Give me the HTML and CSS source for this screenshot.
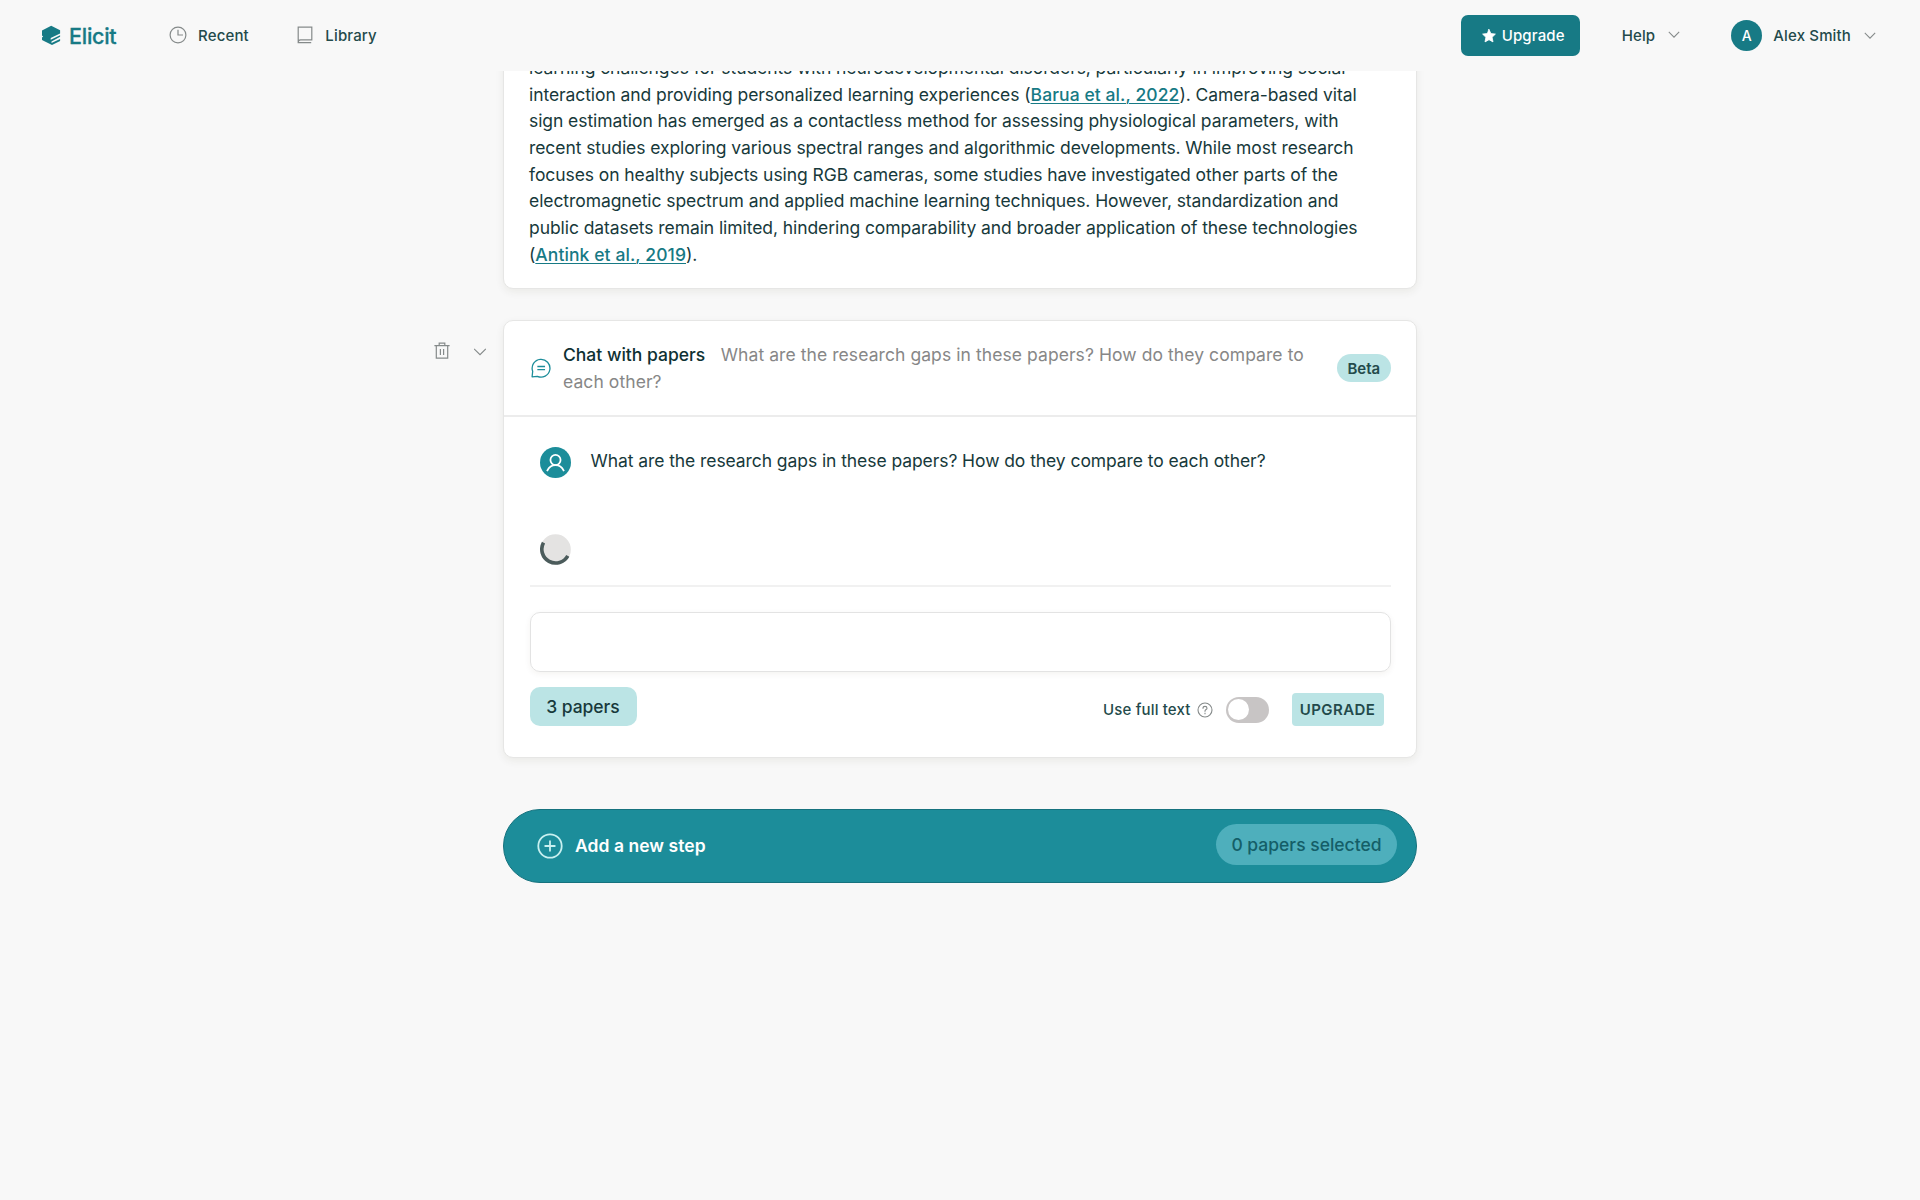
FILE: index.html
```html
<!DOCTYPE html>
<html lang="en">
<head>
<meta charset="utf-8">
<title>Elicit</title>
<link rel="stylesheet" href="styles.css">
</head>
<body>
<header class="topbar">
  <a class="brand"><svg class="brand-mark" viewBox="0 0 20 21"><path d="M1 5.4 10.2.8l8.9 4.4v3.2L9.7 13v1.7l9.4-4.5v1.6l-8.6 4.6v1.5l8.6-3.9v1.9L11 20.1 1 15v-2.6l1.2-.9L1 10.6z" fill="#177a85"/></svg><span class="brand-name">Elicit</span></a>
  <nav class="nav">
    <a class="nav-item"><svg class="ico" viewBox="0 0 18 18"><circle cx="9" cy="9" r="7.9"/><path d="M9 4.4V9h4.4"/></svg><span class="lbl">Recent</span></a>
    <a class="nav-item"><svg class="ico" viewBox="0 0 18 18"><path d="M2.2 16.6V1.1h13.6v12.7H4.6c-1.5 0-2.4 1.1-2.4 2.8h12.4"/></svg><span class="lbl">Library</span></a>
  </nav>
  <div class="account">
    <a class="upgrade"><svg class="star" viewBox="0 0 14 14"><path d="M7 .5l1.9 4.1 4.5.5-3.3 3.2.9 4.6L7 10.700 3 12.900l.9-4.6L.6 5.100l4.500-.5z"/></svg><span class="upgrade-label">Upgrade</span></a>
    <a class="menu help"><span class="lbl">Help</span><svg class="chev" viewBox="0 0 12 8"><path d="M1.2 1.3 6 6.100l4.800-4.800"/></svg></a>
    <a class="menu"><span class="avatar">A</span><span class="lbl">Alex Smith</span><svg class="chev" viewBox="0 0 12 8"><path d="M1.2 1.3 6 6.100l4.800-4.800"/></svg></a>
  </div>
</header>
<main class="column">
  <div class="clip">
    <section class="card summary">
      <p class="prose">learning challenges for students with neurodevelopmental disorders, particularly in improving social<br>interaction and providing personalized learning experiences (<a class="cite">Barua et al., 2022</a>). Camera-based vital<br>sign estimation has emerged as a contactless method for assessing physiological parameters, with<br>recent studies exploring various spectral ranges and algorithmic developments. While most research<br>focuses on healthy subjects using RGB cameras, some studies have investigated other parts of the<br>electromagnetic spectrum and applied machine learning techniques. However, standardization and<br>public datasets remain limited, hindering comparability and broader application of these technologies<br>(<a class="cite">Antink et al., 2019</a>).</p>
    </section>
  </div>
  <div class="step">
    <div class="step-tools">
      <svg class="trash" viewBox="0 0 16 18"><path d="M1 3.600h14M2.300 3.600v12.600h11.400V3.600M5.200 3.400V1.200h5.600v2.200M6.400 7.600v4.800M9.600 7.600v4.800"/></svg>
      <svg class="chev big" viewBox="0 0 12 8"><path d="M.6 1.300 6 6.700l5.400-5.400"/></svg>
    </div>
    <section class="card chat">
      <div class="chat-head">
        <svg class="bubble" viewBox="0 0 20 20"><path d="M1.100 18.800 1.700 13.300A8.900 8.900 0 1 1 6.300 18.300zM7 8.500h6.400M7 11.600h6.400"/></svg>
        <p class="chat-title"><b>Chat with papers</b><span class="query">What are the research gaps in these papers? How do they compare to<br>each other?</span></p>
        <span class="beta">Beta</span>
      </div>
      <div class="chat-body">
        <div class="thread">
          <div class="message"><span class="user"><svg viewBox="0 0 30 30"><circle cx="15" cy="12.600" r="4.900"/><path d="M7.200 22.600c1.500-3.300 4.400-5.100 7.800-5.100s6.300 1.800 7.800 5.100"/></svg></span><span class="msg">What are the research gaps in these papers? How do they compare to each other?</span></div>
          <svg class="spinner" viewBox="0 0 31 31"><circle cx="15.5" cy="15.5" r="15.300" fill="#e4e3e2"/><path d="M3.500 8.600A13.800 13.800 0 1 0 27.800 21.800" fill="none" stroke="#4b5b5b" stroke-width="3.600" stroke-linecap="butt"/></svg>
        </div>
        <div class="input"></div>
        <div class="controls">
          <span class="papers">3 papers</span>
          <div class="options">
            <span class="lbl full">Use full text</span>
            <svg class="question" viewBox="0 0 16 16"><circle cx="8" cy="8" r="7"/><path d="M6 6.300c0-1.200.9-1.900 2-1.900s2 .7 2 1.800c0 1.300-2 1.400-2 2.900M8 11.300v.3"/></svg>
            <span class="toggle"><i class="knob"></i></span>
            <span class="upsell">UPGRADE</span>
          </div>
        </div>
      </div>
    </section>
  </div>
  <div class="add"><svg class="plus" viewBox="0 0 26 26"><circle cx="13" cy="13" r="11.700"/><path d="M13 8.200v9.600M8.200 13h9.600"/></svg><span class="add-label">Add a new step</span><span class="selected">0 papers selected</span></div>
</main>
</body>
</html>
```
FILE: styles.css
```css
* { box-sizing: border-box; }
body { margin: 0; height: 1200px; background: #f8f8f8; font: 400 17.5px/26.67px Inter, sans-serif; letter-spacing: -.075px; color: #17393b; overflow: hidden; }
svg { display: block; flex: none; fill: none; stroke-linecap: square; }

/* Top bar */
.topbar { display: flex; align-items: center; height: 71px; padding: 0 44px 0 41px; }
.brand { display: flex; align-items: center; gap: 8px; width: 127.5px; }
.brand-mark { width: 20px; height: 21px; }
.brand-name { padding-top: 1px; font-size: 21.5px; font-weight: 500; letter-spacing: -.25px; color: #177a85; -webkit-text-stroke: .3px #177a85; }
.nav { display: flex; gap: 47px; }
.nav-item { display: flex; align-items: center; gap: 11.5px; }
.ico { width: 18px; height: 18px; stroke: #858a8a; stroke-width: 1.2; }
.lbl { padding-top: 1px; font-size: 15px; font-weight: 500; letter-spacing: .15px; color: #234a4b; }
.account { display: flex; align-items: center; margin-left: auto; }
.upgrade { display: flex; align-items: center; justify-content: center; gap: 6px; width: 119px; height: 41px; padding-left: 6px; border-radius: 7px; background: #177a85; color: #fff; }
.upgrade-label { padding-top: 1px; font-size: 15px; font-weight: 500; letter-spacing: .15px; }
.star { width: 14px; height: 14px; fill: #fff; stroke: #fff; stroke-width: .8; stroke-linejoin: round; }
.menu { display: flex; align-items: center; }
.help { margin: 0 51px 0 42px; }
.chev { width: 12px; height: 8px; margin-left: 13px; stroke: #858a8a; stroke-width: 1.1; }
.avatar { width: 31px; height: 31px; margin-right: 11px; border-radius: 50%; background: #177a85; color: #fff; font-size: 14px; font-weight: 500; line-height: 32px; text-align: center; }

/* Notebook column */
.column { width: 914px; margin: 0 auto; }
.card { background: #fff; border: 1px solid #e6e6e5; border-radius: 10px; box-shadow: 0 3px 8px rgba(60, 50, 20, .07); }
.clip { display: flex; align-items: flex-end; height: 249px; margin: 0 -20px; padding: 0 20px 31px; overflow: hidden; }
.summary { width: 100%; padding: 20px 25px 19.5px; }
.prose { margin: 0; white-space: nowrap; }
.cite { color: #177a85; font-weight: 500; letter-spacing: .09px; text-decoration: underline; text-underline-offset: 2px; text-decoration-thickness: 1px; }
.step { display: flex; margin-left: -69px; }
.step-tools { display: flex; width: 69px; padding-top: 22px; }
.trash { width: 16px; height: 18px; stroke: #858a8a; stroke-width: 1.2; }
.chev.big { margin: 6px 0 0 24px; }
.chat { width: 914px; height: 438px; }
.chat-head { display: flex; align-items: center; height: 96px; padding: 0 25px 0 26px; border-bottom: 2px solid #ececec; }
.bubble { width: 20px; height: 20px; margin: 0 12px 0 1px; stroke: #1c8d9a; stroke-width: 1.3; stroke-linejoin: round; }
.chat-title { flex: 1; margin: 0; padding-top: 1px; color: #878787; white-space: nowrap; }
.chat-title b { margin-right: 15.5px; font-weight: 500; letter-spacing: 0; color: #0e3133; }
.query { letter-spacing: .075px; }
.beta { height: 28px; padding: 0 11px; border-radius: 14px; background: #bbe4e5; color: #234a4b; font-size: 15px; font-weight: 600; line-height: 29px; }
.chat-body { padding: 0 25.5px; }
.thread { padding: 30px 0 20px 10px; border-bottom: 2px solid #f1f1f1; }
.message { display: flex; gap: 20px; }
.msg { padding-top: 1px; }
.user { width: 31px; height: 31px; border-radius: 50%; background: #1c8d9a; }
.user svg { width: 31px; height: 31px; stroke: #fff; stroke-width: 1.7; }
.spinner { width: 31px; height: 31px; margin-top: 56px; }
.input { height: 60px; margin-top: 25px; border: 1px solid #e3e3e3; border-radius: 10px; box-shadow: 0 2px 6px rgba(60, 50, 20, .06); }
.controls { display: flex; margin-top: 15px; }
.papers { width: 107px; height: 39px; border-radius: 10px; background: #bbe4e5; font-weight: 500; line-height: 40px; text-align: center; }
.options { display: flex; align-items: center; margin-left: auto; padding: 6px 7px 0 0; }
.question { width: 16px; height: 16px; margin: 0 13px 0 6px; stroke: #858a8a; stroke-width: 1.1; }
.toggle { width: 43px; height: 26px; padding: 2.5px; border-radius: 13px; background: #c8c5c5; }
.knob { display: block; width: 21px; height: 21px; border-radius: 50%; background: #fff; }
.upsell { width: 92px; height: 33px; margin-left: 23px; border-radius: 4px; background: #bbe4e5; color: #234a4b; font-size: 15px; font-weight: 600; letter-spacing: .4px; line-height: 34px; text-align: center; }

/* Add-step bar */
.add { display: flex; align-items: center; height: 74px; margin-top: 51px; padding: 0 19px 0 33px; border: 1px solid #16727e; border-radius: 37px; background: #1c8d9a; color: #fff; }
.plus { width: 26px; height: 26px; stroke: #c8f0f0; stroke-width: 1.8; stroke-linecap: round; }
.add-label { margin-left: 12px; font-weight: 600; letter-spacing: .05px; }
.selected { width: 181px; height: 41px; margin: -3px 0 0 auto; border-radius: 21px; background: #4eafbc; color: #145e68; font-weight: 500; letter-spacing: 0; line-height: 41px; text-align: center; }
```
